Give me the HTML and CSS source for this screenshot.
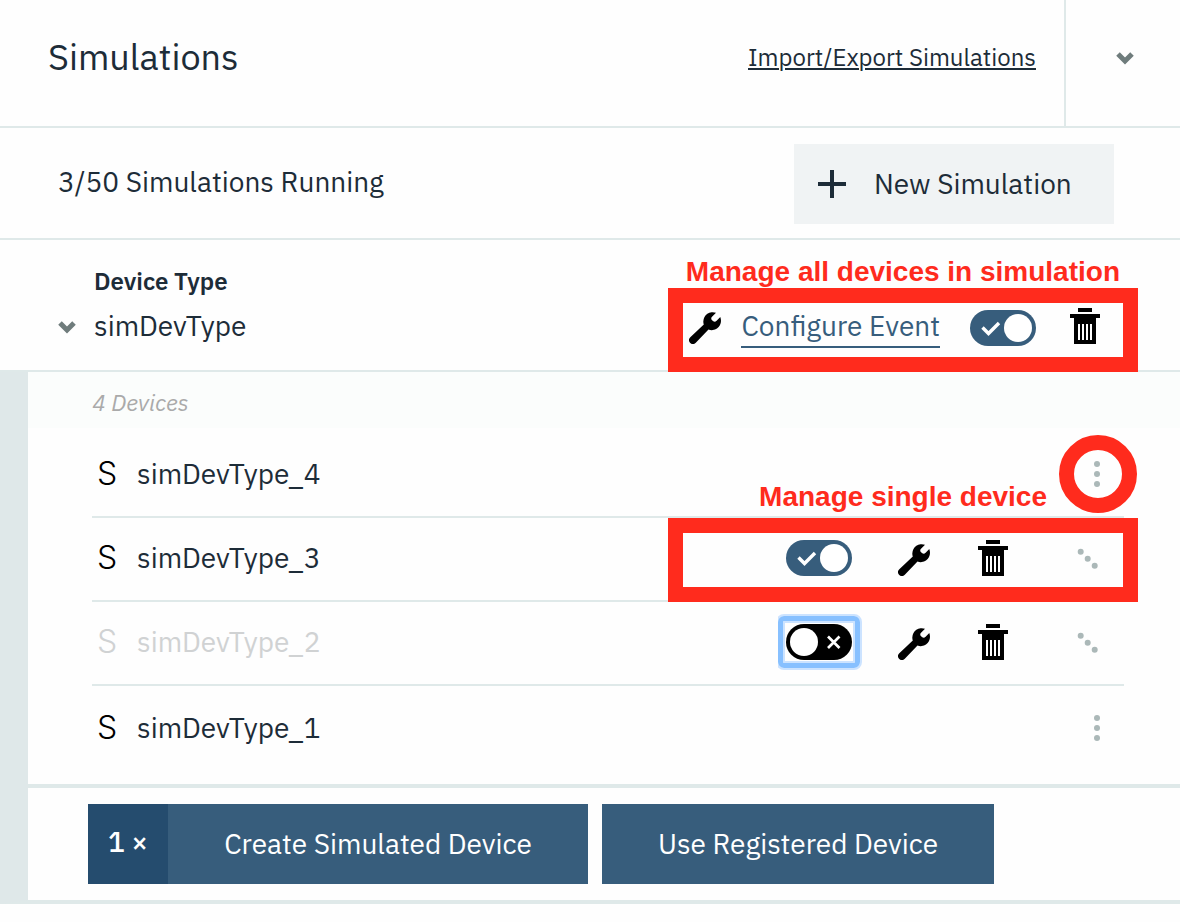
FILE: index.html
```html
<!DOCTYPE html>
<html lang="en">
<head>
<meta charset="utf-8">
<title>Simulations</title>
<link rel="stylesheet" href="styles.css">
</head>
<body>
<svg class="sprite" aria-hidden="true">
  <symbol id="chevron" viewBox="0 0 18 14"><path d="M2 3l7 7 7-7" fill="none" stroke="currentColor" stroke-width="5"/></symbol>
  <symbol id="wrench" viewBox="0 -4 34 36"><path d="M27 .8A9.3 9.3 0 0 0 14.300 9.500Q14.300 11.300 14.800 12.600L1.300 25.300A4 4 0 0 0 1 30.800A4.200 4.200 0 0 0 6.800 30.800L19.500 17.600A9.300 9.300 0 0 0 32 9Q32 6.800 31.300 5L27.600 8.800Q26 10.300 24.300 9.300L22.800 8Q21.600 6.400 23 4.800Z"/></symbol>
  <symbol id="trash" viewBox="0 0 30 36"><path fill-rule="evenodd" d="M8 0H22V4H8ZM0 6H30V10H26V36H4V10H0ZM8 16V32H10V16ZM12 16V32H14V16ZM16 16V32H18V16ZM20 16V32H22V16Z"/></symbol>
  <symbol id="toggle-on" viewBox="0 0 66 36"><circle cx="48" cy="18" r="14" fill="#fff"/><path d="M12.500 17.500l6 6 10.500-10.500" fill="none" stroke="#fff" stroke-width="3.400"/></symbol>
  <symbol id="toggle-off" viewBox="0 0 66 36"><circle cx="18" cy="18" r="14" fill="#fff"/><path d="M42 12.500l11.500 11.500M53.500 12.500L42 24" fill="none" stroke="#fff" stroke-width="2.700"/></symbol>
  <symbol id="dots" viewBox="0 0 48 30"><circle cx="25" cy="5" r="3"/><circle cx="25" cy="15" r="3"/><circle cx="25" cy="25" r="3"/></symbol>
  <symbol id="dots-open" viewBox="0 0 48 30"><circle cx="8.700" cy="8.700" r="3"/><circle cx="15.700" cy="15.700" r="3"/><circle cx="22.700" cy="22.700" r="3"/></symbol>
</svg>

<header class="header">
  <h1 class="title">Simulations</h1>
  <a class="transfer-link" href="#">Import/Export Simulations</a>
  <button class="collapse" type="button" aria-label="Collapse panel"><svg class="icon-chevron"><use href="#chevron"/></svg></button>
</header>

<main>
  <section class="status">
    <p class="status-text">3/50 Simulations Running</p>
    <button class="new-button" type="button">
      <svg class="icon-plus" viewBox="0 0 28 28"><path d="M14 0V28M0 14H28" stroke="currentColor" stroke-width="4"/></svg>
      New Simulation
    </button>
  </section>

  <section class="summary">
    <h2 class="summary-label">Device Type</h2>
    <button class="expand" type="button" aria-label="Collapse simDevType"><svg class="icon-chevron"><use href="#chevron"/></svg></button>
    <span class="summary-name">simDevType</span>
    <div class="summary-actions">
      <a class="configure" href="#"><svg class="icon-wrench"><use href="#wrench"/></svg><span class="configure-text">Configure Event</span></a>
      <label class="toggle"><input type="checkbox" aria-label="Run all devices" checked><svg><use href="#toggle-on"/></svg></label>
      <button class="icon-button" type="button" aria-label="Delete simulation"><svg class="icon-trash"><use href="#trash"/></svg></button>
    </div>
    <span class="note note-all">Manage all devices in simulation</span>
    <span class="frame frame-all"></span>
  </section>

  <section class="devices">
    <p class="count">4 Devices</p>
    <ul class="list">
      <li class="row">
        <span class="kind">S</span><span class="name">simDevType_4</span>
        <button class="icon-button" type="button" aria-label="More actions"><svg class="icon-dots"><use href="#dots"/></svg></button>
        <span class="ring"></span>
      </li>
      <li class="row">
        <span class="kind">S</span><span class="name">simDevType_3</span>
        <div class="row-actions">
          <label class="toggle"><input type="checkbox" aria-label="Run simDevType_3" checked><svg><use href="#toggle-on"/></svg></label>
          <button class="icon-button" type="button" aria-label="Configure"><svg class="icon-wrench"><use href="#wrench"/></svg></button>
          <button class="icon-button" type="button" aria-label="Delete"><svg class="icon-trash"><use href="#trash"/></svg></button>
        </div>
        <button class="icon-button" type="button" aria-label="Hide actions"><svg class="icon-dots"><use href="#dots-open"/></svg></button>
        <span class="note note-single">Manage single device</span>
        <span class="frame frame-single"></span>
      </li>
      <li class="row row-stopped">
        <span class="kind">S</span><span class="name">simDevType_2</span>
        <div class="row-actions">
          <label class="toggle toggle-focused"><input type="checkbox" aria-label="Run simDevType_2"><svg><use href="#toggle-off"/></svg></label>
          <button class="icon-button" type="button" aria-label="Configure"><svg class="icon-wrench"><use href="#wrench"/></svg></button>
          <button class="icon-button" type="button" aria-label="Delete"><svg class="icon-trash"><use href="#trash"/></svg></button>
        </div>
        <button class="icon-button" type="button" aria-label="Hide actions"><svg class="icon-dots"><use href="#dots-open"/></svg></button>
      </li>
      <li class="row">
        <span class="kind">S</span><span class="name">simDevType_1</span>
        <button class="icon-button" type="button" aria-label="More actions"><svg class="icon-dots"><use href="#dots"/></svg></button>
      </li>
    </ul>
    <div class="footer">
      <div class="create">
        <button class="quantity" type="button">1 <span class="times">×</span></button>
        <button class="primary primary-create" type="button">Create Simulated Device</button>
      </div>
      <button class="primary" type="button">Use Registered Device</button>
    </div>
  </section>
</main>
</body>
</html>
```

FILE: styles.css
```css
* { box-sizing: border-box; }

body {
  margin: 0;
  background: #fefefe;
  color: #1d2c38;
  font-family: "IBM Plex Sans", Roboto, sans-serif;
  font-size: 28px;
  line-height: 40px;
}

h1, h2, p, ul { margin: 0; padding: 0; }
svg { display: block; }
.sprite { position: absolute; width: 0; height: 0; }

button {
  margin: 0;
  padding: 0;
  border: 0;
  background: none;
  color: inherit;
  font: inherit;
  cursor: pointer;
}

.icon-chevron { width: 18px; height: 14px; color: #6f7c7c; }
.icon-wrench { width: 34px; height: 36px; fill: #000; }
.icon-trash { width: 30px; height: 36px; fill: #000; }
.icon-dots { width: 48px; height: 30px; fill: #abb8b8; }
.icon-plus { width: 28px; height: 28px; }
.icon-button { flex: none; }

.header {
  display: flex;
  align-items: stretch;
  min-height: 128px;
  border-bottom: 2px solid #dfe9e9;
}

.title {
  flex: 1;
  padding: 33px 48px;
  font-size: 36px;
  font-weight: 400;
  line-height: 48px;
}

.transfer-link {
  padding: 37px 28px;
  color: inherit;
  font-size: 24px;
  text-decoration-thickness: 2px;
  text-underline-offset: 2px;
}

.collapse {
  display: flex;
  justify-content: center;
  align-items: center;
  width: 116px;
  padding: 0 0 10px 4px;
  border-left: 2px solid #dfe9e9;
}

.status {
  display: flex;
  justify-content: space-between;
  align-items: center;
  padding: 16px 66px 14px 58px;
  border-bottom: 2px solid #dfe9e9;
}

.status-text { padding-bottom: 4px; }

.new-button {
  display: flex;
  align-items: center;
  gap: 28px;
  min-width: 320px;
  min-height: 80px;
  padding: 0 24px;
  background: #f0f3f4;
}

.summary {
  position: relative;
  display: grid;
  grid-template-columns: 18px 1fr auto;
  grid-template-rows: 40px 48px;
  column-gap: 18px;
  align-items: center;
  padding: 22px 80px 20px 58px;
  border-bottom: 2px solid #dfe9e9;
}

.summary-label {
  grid-column: 2 / 4;
  padding-bottom: 2px;
  font-size: 24px;
  font-weight: 600;
}

.expand { padding-top: 2px; }

.summary-actions { display: flex; align-items: center; }
.summary-actions .toggle { margin: 4px 34px 0 30px; }

.configure {
  display: flex;
  align-items: center;
  gap: 18px;
  color: #375d7c;
  text-decoration: none;
}

.configure-text {
  padding-top: 2px;
  border-bottom: 2px solid #375d7c;
}

.toggle {
  position: relative;
  flex: none;
  width: 66px;
  height: 36px;
}

.toggle input {
  display: block;
  width: 66px;
  height: 36px;
  margin: 0;
  border-radius: 18px;
  background: #000;
  appearance: none;
}

.toggle input:checked { background: #375d7c; }

.toggle svg {
  position: absolute;
  inset: 0;
  width: 66px;
  height: 36px;
  pointer-events: none;
}

.toggle-focused::after {
  content: "";
  position: absolute;
  inset: -8px;
  border: 5px solid #87c0ff;
  border-radius: 6px;
  box-shadow: 0 0 0 2px #cce3ff, inset 0 0 0 2px #cce3ff;
  clip-path: inset(-2px -2px -2px 0);
  pointer-events: none;
}

.note {
  position: absolute;
  color: #ff2b1d;
  font-family: "Liberation Sans", Arial, sans-serif;
  font-size: 28px;
  font-weight: 700;
  line-height: 32px;
  white-space: nowrap;
}

.note-all { top: 16px; right: 60px; }
.note-single { top: -37px; right: 77px; }

.frame, .ring {
  position: absolute;
  border: 15px solid #ff2b1d;
  pointer-events: none;
}

.frame { width: 470px; height: 84px; }
.frame-all { top: 48px; right: 42px; }
.frame-single { top: 0; right: -14px; }

.ring {
  top: 1px;
  right: -13px;
  width: 78px;
  height: 78px;
  border-radius: 50%;
}

.devices {
  border-left: 28px solid #dfe8e9;
  border-bottom: 4px solid #dfe9e9;
}

.count {
  padding: 10px 64px 6px;
  background: #fbfdfc;
  color: #aaa;
  font-size: 23px;
  font-style: italic;
}

.list {
  padding: 6px 56px 14px 64px;
  border-bottom: 4px solid #dfe9e9;
  list-style: none;
}

.row {
  position: relative;
  display: flex;
  align-items: center;
  min-height: 84px;
  padding: 0 4px 2px 5px;
  border-bottom: 2px solid #dfe9e9;
}

.row:last-child { padding-bottom: 0; border-bottom: 0; }

.kind {
  width: 40px;
  color: #000;
  font-family: Inter, sans-serif;
  font-size: 32px;
  font-weight: 300;
}

.name { flex: 1; }
.row-stopped .kind, .row-stopped .name { color: #d0d2d3; }

.row-actions {
  display: flex;
  gap: 46px;
  margin-right: 64px;
}

.footer {
  display: flex;
  gap: 14px;
  padding: 16px 60px;
}

.create { display: flex; }

.quantity {
  width: 80px;
  padding-bottom: 4px;
  background: #254c6e;
  color: #fff;
  font-weight: 500;
}

.primary {
  min-width: 392px;
  min-height: 80px;
  background: #375d7c;
  color: #fff;
}

.primary-create { min-width: 420px; }
```
